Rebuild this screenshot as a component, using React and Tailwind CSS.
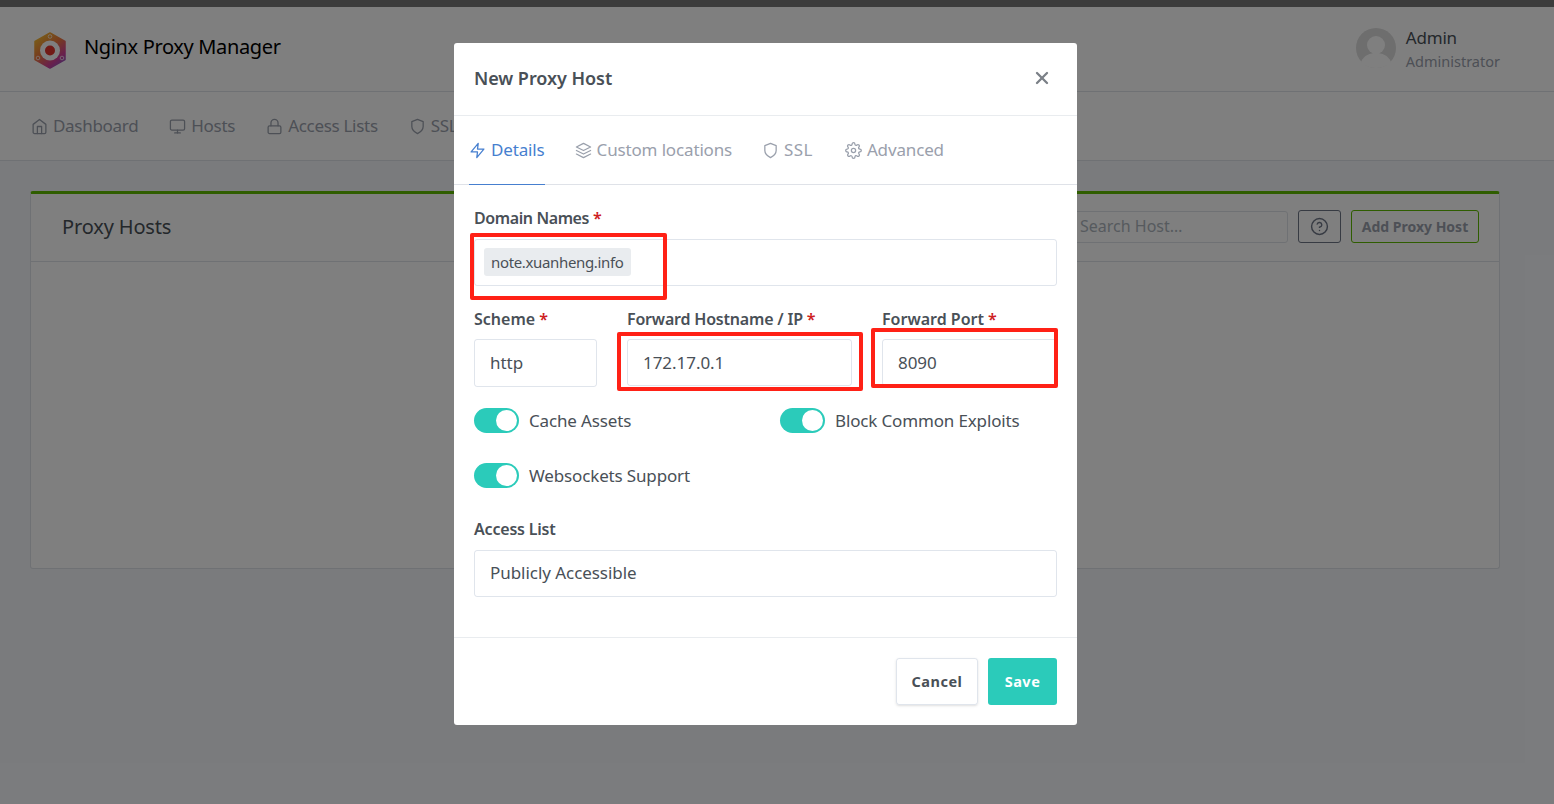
import { FiHome, FiMonitor, FiLock, FiShield, FiZap, FiLayers, FiSettings, FiHelpCircle, FiX } from "react-icons/fi";

const navItems = [
  { name: "Dashboard", icon: FiHome },
  { name: "Hosts", icon: FiMonitor },
  { name: "Access Lists", icon: FiLock },
  { name: "SSL", icon: FiShield },
];

const tabs = [
  { name: "Details", icon: FiZap, active: true },
  { name: "Custom locations", icon: FiLayers },
  { name: "SSL", icon: FiShield, extra: "tracking-[0.4px]" },
  { name: "Advanced", icon: FiSettings, extra: "ml-[2px]" },
];

function Logo() {
  return (
    <svg width="34" height="37" viewBox="0 0 34 37" className="mt-[2px]">
      <defs>
        <linearGradient id="npm" x1="0.1" y1="0" x2="0.8" y2="1">
          <stop offset="0" stopColor="#f4c430" />
          <stop offset="0.45" stopColor="#ee7a3c" />
          <stop offset="0.8" stopColor="#d2409a" />
          <stop offset="1" stopColor="#8a55c0" />
        </linearGradient>
      </defs>
      <path d="M17 1 L32 9.5 L32 27.5 L17 36 L2 27.5 L2 9.5 Z" fill="url(#npm)" stroke="url(#npm)" strokeWidth="1.5" strokeLinejoin="round" />
      <circle cx="17" cy="18.5" r="10" fill="#fff" />
      <circle cx="17" cy="18.5" r="5" fill="#e2352c" />
      <circle cx="17" cy="4.5" r="1.8" fill="none" stroke="#fff" strokeOpacity="0.7" />
      <circle cx="5" cy="26" r="1.8" fill="none" stroke="#fff" strokeOpacity="0.7" />
      <circle cx="29" cy="26" r="1.8" fill="none" stroke="#fff" strokeOpacity="0.7" />
    </svg>
  );
}

function Avatar() {
  return (
    <svg width="40" height="40" viewBox="0 0 40 40" className="mb-[4px]">
      <circle cx="20" cy="20" r="20" fill="#dcdcdc" />
      <circle cx="20" cy="17" r="9" fill="#fff" />
      <path d="M5 34 C8 27 14 25 20 25 C26 25 32 27 35 34 C31 38 26 40 20 40 C14 40 9 38 5 34 Z" fill="#fff" />
    </svg>
  );
}

function Switch({ label, className }) {
  return (
    <div className={`flex items-center gap-[10px] ${className || ""}`}>
      <div className="flex h-[25px] w-[45px] items-center justify-end rounded-full bg-[#2bcbba] pr-[2px]">
        <div className="h-[21px] w-[21px] rounded-full bg-white" />
      </div>
      <span className="text-[17px] leading-[25px] tracking-[-0.15px] text-[#495057]">{label}</span>
    </div>
  );
}

function Label({ children, required, tracking, className }) {
  return (
    <div className={`flex h-[22px] items-center text-[16px] font-semibold text-[#495057] ${tracking || "tracking-[-0.2px]"} ${className || "mb-[10px]"}`}>
      {children}
      {required && <span className="ml-[4px] text-[#cd201f]">*</span>}
    </div>
  );
}

function Field({ value, className }) {
  return (
    <div className={`flex h-[47px] items-center rounded-[3px] border border-[rgba(0,40,100,0.12)] px-[15px] text-[17px] tracking-[-0.05px] text-[#495057] ${className || ""}`}>
      {value}
    </div>
  );
}

function Page() {
  return (
    <div className="h-full bg-[#f5f7fb]">
      {/* Header */}
      <div className="flex h-[85px] items-center justify-between border-b border-[#dfe2e8] bg-white pl-[33px] pr-[54px]">
        <div className="flex items-start gap-[17px]">
          <Logo />
          <span className="mt-[1px] text-[20px] leading-[32px] tracking-[-0.35px] text-black">Nginx Proxy Manager</span>
        </div>
        <div className="flex items-center gap-[10px] pt-[2px]">
          <Avatar />
          <div className="flex flex-col">
            <span className="text-[17px] leading-[22px] tracking-[-0.2px] text-[#495057]">Admin</span>
            <span className="text-[14.5px] leading-[24px] text-[#9aa0ac]">Administrator</span>
          </div>
        </div>
      </div>
      {/* Nav */}
      <div className="flex h-[69px] items-center gap-[31px] border-b border-[#dfe2e8] bg-white pl-[31px]">
        {navItems.map((item) => (
          <div key={item.name} className="flex items-center gap-[5px] text-[17px] tracking-[-0.3px] text-[#9aa0ac]">
            <item.icon size={17} strokeWidth={1.8} />
            {item.name}
          </div>
        ))}
      </div>
      {/* Card */}
      <div className="ml-[30px] mt-[30px] flex h-[378px] w-[1470px] flex-col rounded-[3px] border border-t-[3px] border-[#dfe2e8] border-t-[#5eba00] bg-white">
        <div className="flex h-[68px] items-center justify-between border-b border-[#dfe2e8] pb-[2px] pl-[31px] pr-[20px]">
          <span className="text-[20px] tracking-[-0.15px] text-[#495057]">Proxy Hosts</span>
          <div className="flex items-center gap-[10px]">
            <div className="flex h-[32px] w-[240px] items-center rounded-[3px] border border-[#dfe2e8] pb-[2px] pl-[31px] text-[16px] text-[#adb5bd]">
              Search Host…
            </div>
            <div className="flex h-[33px] w-[43px] items-center justify-center rounded-[3px] border border-[#6e7687] text-[#6e7687]">
              <FiHelpCircle size={19} strokeWidth={1.8} />
            </div>
            <div className="flex h-[33px] w-[128px] items-center justify-center rounded-[3px] border border-[#5eba00] pb-[1px] text-[14px] font-bold text-[#9aa0ac]">
              Add Proxy Host
            </div>
          </div>
        </div>
      </div>
    </div>
  );
}

function Modal() {
  return (
    <div className="ml-[454px] mt-[36px] w-[623px] rounded-[3px] bg-white">
      <div className="flex h-[73px] items-center justify-between border-b border-[#e9ecef] pb-[2px] pl-[20px] pr-[25px]">
        <span className="text-[18px] font-semibold tracking-[-0.05px] text-[#495057]">New Proxy Host</span>
        <FiX size={20} strokeWidth={2.8} className="text-[#7b8087]" />
      </div>
      <div className="flex h-[69px] items-stretch gap-[30px] border-b border-[#dfe2e8] pl-[15px]">
        {tabs.map((tab) => (
          <div
            key={tab.name}
            className={`-mb-px flex items-center gap-[5px] border-b text-[17px] tracking-[-0.15px] ${
              tab.active ? "border-[#467fcf] text-[#467fcf]" : "border-transparent text-[#9aa0ac]"
            } ${tab.extra || ""}`}
          >
            <tab.icon size={17} strokeWidth={1.8} />
            {tab.name}
          </div>
        ))}
      </div>
      <div className="px-[20px] pt-[22px]">
        <Label required tracking="tracking-[-0.4px]">Domain Names</Label>
        <div className="flex h-[47px] items-center rounded-[3px] border border-[rgba(0,40,100,0.12)] pb-[2px] pl-[9px]">
          <span className="flex h-[28px] w-[147px] items-center rounded-[3px] bg-[#e9ecef] pl-[7px] pt-[2px] text-[15px] tracking-[-0.35px] text-[#495057]">
            note.xuanheng.info
          </span>
        </div>
        <div className="mt-[22px] flex">
          <div className="w-[123px]">
            <Label required tracking="tracking-normal" className="mb-[9px]">Scheme</Label>
            <Field value="http" className="h-[48px]" />
          </div>
          <div className="ml-[30px] w-[225px]">
            <Label required className="mb-[9px]">Forward Hostname / IP</Label>
            <Field value="172.17.0.1" />
          </div>
          <div className="ml-[30px] w-[175px]">
            <Label required tracking="tracking-normal" className="mb-[9px]">Forward Port</Label>
            <Field value="8090" />
          </div>
        </div>
        <div className="mt-[21px] flex">
          <Switch label="Cache Assets" className="w-[306px]" />
          <Switch label="Block Common Exploits" />
        </div>
        <Switch label="Websockets Support" className="mt-[30px]" />
        <div className="mt-[30px]">
          <Label>Access List</Label>
          <Field value="Publicly Accessible" className="pb-[2px]" />
        </div>
      </div>
      <div className="mt-[40px] flex h-[88px] items-center justify-end gap-[10px] border-t border-[#e9ecef] pr-[20px]">
        <div className="flex h-[47px] w-[82px] items-center justify-center rounded-[3px] border border-[rgba(0,40,100,0.12)] text-[14.5px] font-bold tracking-[0.5px] text-[#495057] shadow-sm">
          Cancel
        </div>
        <div className="flex h-[47px] w-[69px] items-center justify-center rounded-[3px] bg-[#2bcbba] text-[14.5px] font-bold tracking-[0.5px] text-white">
          Save
        </div>
      </div>
    </div>
  );
}

export default function App() {
  return (
    <div className="flex h-[804px] w-[1554px] flex-col overflow-hidden font-['Noto_Sans',sans-serif]">
      <div className="h-[7px] bg-[#3c3c3c]" />
      <div className="relative flex-1">
        <Page />
        <div className="absolute inset-0 bg-black/50">
          <Modal />
        </div>
        {/* Red annotation boxes, the page offset is the 7px strip */}
        <div className="absolute left-[470px] top-[226px] h-[67px] w-[197px] rounded-[2px] border-[4px] border-[#ff2116]" />
        <div className="absolute left-[617px] top-[325px] h-[59px] w-[246px] rounded-[2px] border-[4px] border-[#ff2116]" />
        <div className="absolute left-[871px] top-[321px] h-[60px] w-[187px] rounded-[2px] border-[4px] border-[#ff2116]" />
      </div>
    </div>
  );
}
